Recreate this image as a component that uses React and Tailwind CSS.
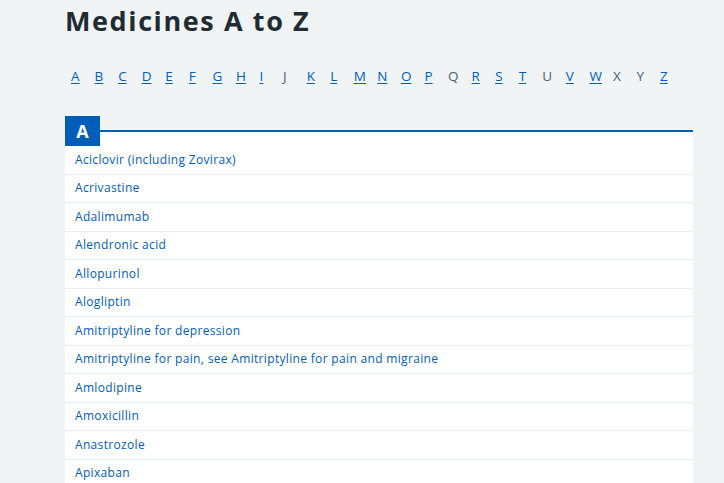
import React from "react";

const letters = "ABCDEFGHIJKLMNOPQRSTUVWXYZ".split("");
const inactive = new Set(["J", "Q", "U", "X", "Y"]);
const items = [
  "Aciclovir (including Zovirax)",
  "Acrivastine",
  "Adalimumab",
  "Alendronic acid",
  "Allopurinol",
  "Alogliptin",
  "Amitriptyline for depression",
  "Amitriptyline for pain, see Amitriptyline for pain and migraine",
  "Amlodipine",
  "Amoxicillin",
  "Anastrozole",
  "Apixaban",
];

export default function App() {
  return (
    <div
      className="w-[724px] h-[483px] overflow-hidden bg-[#f0f4f5]"
      style={{ fontFamily: '"Open Sans", "Noto Sans", sans-serif' }}
    >
      <div className="ml-[65px] w-[628px]">
        <h1 className="pt-[3px] text-[27px] leading-[36px] font-bold text-[#212b32] tracking-[1.6px]">
          Medicines A to Z
        </h1>
        <nav className="mt-[28px] flex pl-[6px]">
          {letters.map((l) => (
            <span key={l} className="w-[23.57px] text-[13.5px] leading-[18px]">
              {inactive.has(l) ? (
                <span className="text-[#4c6272]">{l}</span>
              ) : (
                <a className="text-[#005eb8] underline underline-offset-[2px]">{l}</a>
              )}
            </span>
          ))}
        </nav>
        <div className="mt-[31px] relative">
          <div className="h-[16px] border-b-2 border-[#005eb8]" />
          <div className="absolute left-0 top-0 w-[35px] h-[30px] bg-[#005eb8] text-white font-bold text-[18px] leading-[30px] text-center">
            A
          </div>
          <ul className="bg-white pt-[14px]">
            {items.map((it) => (
              <li
                key={it}
                className="h-[28.5px] border-b border-[#e8edee] pl-[10px] flex items-center text-[12px] tracking-[0.33px] text-[#005eb8]"
              >
                {it}
              </li>
            ))}
          </ul>
        </div>
      </div>
    </div>
  );
}
